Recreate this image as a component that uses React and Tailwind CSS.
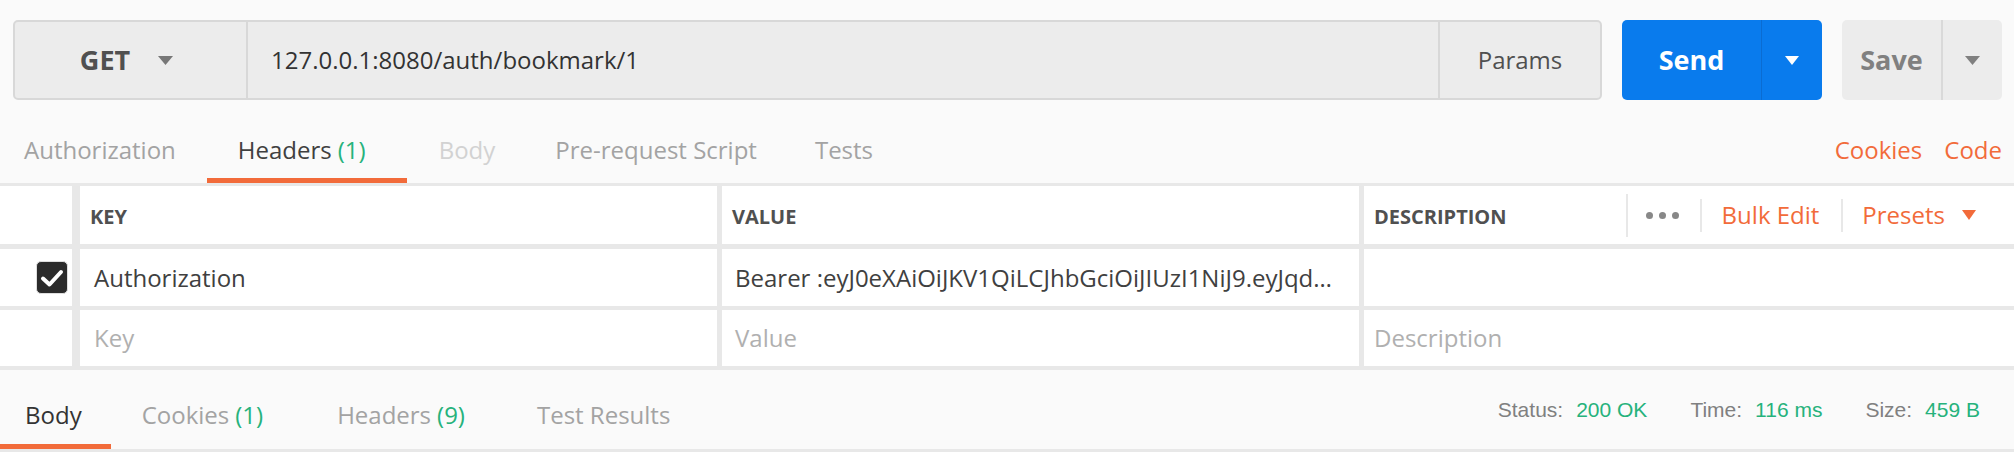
import React from 'react'

function Caret({ className, w = 14, h = 9 }) {
  return (
    <svg width={w} height={h} viewBox={`0 0 ${w} ${h}`} className={className}>
      <path d={`M0 0H${w}L${w / 2} ${h}Z`} fill="currentColor" />
    </svg>
  )
}

function Count({ n }) {
  return <span className="ml-[6px] text-[#26b27c]">({n})</span>
}

function Tab({ active, className = '', children }) {
  return (
    <div
      className={`flex items-center border-b-[5px] ${
        active ? 'border-[#f26b3a]' : 'border-transparent'
      } ${className}`}
    >
      {children}
    </div>
  )
}

function CheckBox() {
  return (
    <div className="flex h-[33px] w-[32px] items-center justify-center rounded-[5px] border border-[#dedede] bg-[#2b2b2b]">
      <svg width="24" height="20" viewBox="0 0 24 20">
        <path d="M3 10.5l6.5 6L21 4" fill="none" stroke="#fff" strokeWidth="4" strokeLinecap="round" strokeLinejoin="round" />
      </svg>
    </div>
  )
}

export default function App() {
  return (
    <div className="h-[452px] w-[2014px] overflow-hidden bg-[#fafafa] font-['Open_Sans',sans-serif] text-[24px] text-[#404040]">
      {/* Request bar */}
      <div className="flex h-[100px] items-start pl-[13px] pt-[20px]">
        <div className="flex h-[80px] w-[1589px] rounded-[5px] border-2 border-[#d8d8d8] bg-[#ececec]">
          <div className="flex w-[233px] items-center justify-center gap-[28px] border-r-2 border-[#d8d8d8] pr-[8px]">
            <span className="text-[27px] font-bold text-[#505050]">GET</span>
            <Caret w={15} h={9} className="text-[#777]" />
          </div>
          <div className="flex flex-1 items-center pl-[23px] text-[#333]">127.0.0.1:8080/auth/bookmark/1</div>
          <div className="flex w-[162px] items-center justify-center border-l-2 border-[#d8d8d8] text-[#505050]">Params</div>
        </div>

        <div className="ml-[20px] flex h-[80px] w-[200px] overflow-hidden rounded-[5px] bg-[#097bed]">
          <div className="flex w-[139px] items-center justify-center text-[27px] font-bold text-white">Send</div>
          <div className="flex flex-1 items-center justify-center border-l border-[#0a6cd2]">
            <Caret w={14} h={9} className="text-white" />
          </div>
        </div>

        <div className="ml-[20px] flex h-[80px] w-[160px] overflow-hidden rounded-[5px] bg-[#ececec]">
          <div className="flex w-[99px] items-center justify-center text-[27px] font-bold text-[#808080]">Save</div>
          <div className="flex flex-1 items-center justify-center border-l-2 border-[#d9d9d9]">
            <Caret w={15} h={9} className="text-[#808080]" />
          </div>
        </div>
      </div>

      {/* Request tabs */}
      <div className="flex h-[86px] border-b-[3px] border-[#e8e8e8]">
        <Tab className="pl-[24px] pr-[31px] pt-[22px] text-[#a3a3a3]">Authorization</Tab>
        <Tab active className="pl-[31px] pr-[41px] pt-[22px] text-[#404040]">
          Headers<Count n={1} />
        </Tab>
        <Tab className="pl-[32px] pr-[30px] pt-[22px] text-[#d2d2d2]">Body</Tab>
        <Tab className="pl-[30px] pr-[29px] pt-[22px] text-[#a3a3a3]">Pre-request Script</Tab>
        <Tab className="pl-[29px] pt-[22px] text-[#a3a3a3]">Tests</Tab>
        <div className="ml-auto flex items-center gap-[22px] pb-[5px] pr-[12px] pt-[22px] text-[#f26b3a]">
          <span>Cookies</span>
          <span>Code</span>
        </div>
      </div>

      {/* Headers table */}
      <div className="bg-white">
        <div className="flex h-[63px] border-b-[5px] border-[#e8e8e8]">
          <div className="w-[80px] border-r-[8px] border-[#e8e8e8]" />
          <div className="flex w-[642px] items-center border-r-[5px] border-[#e8e8e8] pl-[10px] pt-[4px] text-[20px] font-bold text-[#505050]">KEY</div>
          <div className="flex w-[642px] items-center border-r-[5px] border-[#e8e8e8] pl-[10px] pt-[4px] text-[20px] font-bold text-[#505050]">VALUE</div>
          <div className="flex flex-1 items-center pl-[10px]">
            <span className="pt-[4px] text-[20px] font-bold text-[#505050]">DESCRIPTION</span>
            <div className="ml-auto flex items-center">
              <div className="h-[43px] w-[2px] bg-[#e8e8e8]" />
              <div className="flex gap-[6px] pl-[18px] pr-[21px]">
                <span className="h-[7px] w-[7px] rounded-full bg-[#888]" />
                <span className="h-[7px] w-[7px] rounded-full bg-[#888]" />
                <span className="h-[7px] w-[7px] rounded-full bg-[#888]" />
              </div>
              <div className="h-[33px] w-[2px] bg-[#e8e8e8]" />
              <span className="pl-[20px] pr-[22px] text-[#f26b3a]">Bulk Edit</span>
              <div className="h-[33px] w-[2px] bg-[#e8e8e8]" />
              <span className="pl-[19px] text-[#f26b3a]">Presets</span>
              <Caret w={14} h={10} className="ml-[17px] mr-[38px] text-[#f26b3a]" />
            </div>
          </div>
        </div>

        <div className="flex h-[61px] border-b-4 border-[#e8e8e8]">
          <div className="flex w-[80px] items-center justify-end border-r-[8px] border-[#e8e8e8] pr-[4px]">
            <CheckBox />
          </div>
          <div className="flex w-[642px] items-center border-r-[5px] border-[#e8e8e8] pl-[14px]">Authorization</div>
          <div className="flex w-[642px] items-center border-r-[5px] border-[#e8e8e8] pl-[13px]">
            Bearer :eyJ0eXAiOiJKV1QiLCJhbGciOiJIUzI1NiJ9.eyJqd…
          </div>
          <div className="flex-1" />
        </div>

        <div className="flex h-[60px] border-b-4 border-[#e8e8e8]">
          <div className="w-[80px] border-r-[8px] border-[#e8e8e8]" />
          <div className="flex w-[642px] items-center border-r-[5px] border-[#e8e8e8] pl-[14px] text-[#b0b0b0]">Key</div>
          <div className="flex w-[642px] items-center border-r-[5px] border-[#e8e8e8] pl-[13px] text-[#b0b0b0]">Value</div>
          <div className="flex flex-1 items-center pl-[10px] text-[#b0b0b0]">Description</div>
        </div>
      </div>

      {/* Response bar */}
      <div className="flex h-[82px] border-b-[3px] border-[#e8e8e8]">
        <Tab active className="pl-[25px] pr-[29px] pt-[16px] text-[#333]">Body</Tab>
        <Tab className="pl-[31px] pr-[44px] pt-[16px] text-[#a3a3a3]">
          Cookies<Count n={1} />
        </Tab>
        <Tab className="pl-[30px] pr-[42px] pt-[16px] text-[#a3a3a3]">
          Headers<Count n={9} />
        </Tab>
        <Tab className="pl-[30px] pt-[16px] text-[#a3a3a3]">Test Results</Tab>
        <div className="ml-auto flex items-center gap-[43px] pr-[34px] font-['Liberation_Sans',Arial,sans-serif] text-[21px]">
          <div className="flex gap-[13px]">
            <span className="text-[#808080]">Status:</span>
            <span className="text-[#26b27c]">200 OK</span>
          </div>
          <div className="flex gap-[13px]">
            <span className="text-[#808080]">Time:</span>
            <span className="text-[#26b27c]">116 ms</span>
          </div>
          <div className="flex gap-[13px]">
            <span className="text-[#808080]">Size:</span>
            <span className="text-[#26b27c]">459 B</span>
          </div>
        </div>
      </div>
    </div>
  )
}
